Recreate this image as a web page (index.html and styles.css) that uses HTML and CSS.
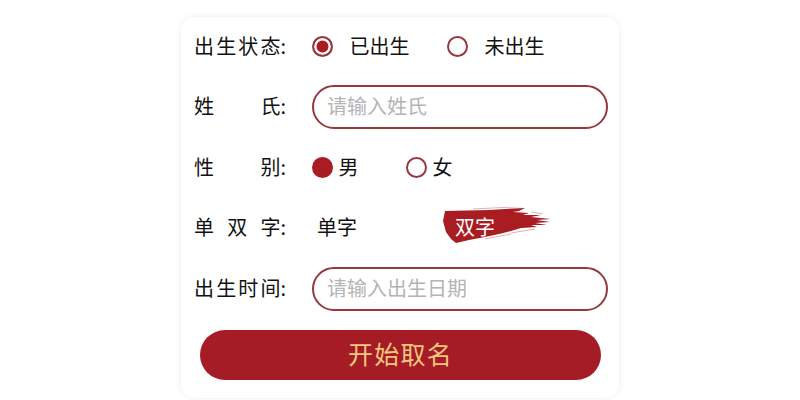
FILE: index.html
```html
<!DOCTYPE html>
<html lang="zh-CN">
<head>
<meta charset="utf-8">
<title>开始取名</title>
<link rel="stylesheet" href="styles.css">
</head>
<body>
<main class="card">
  <div class="row">
    <div class="label"><span>出</span><span>生</span><span>状</span><span>态:</span></div>
    <div class="options status">
      <span class="opt"><span class="radio dot"></span><span class="opt-text">已出生</span></span>
      <span class="opt"><span class="radio"></span><span class="opt-text">未出生</span></span>
    </div>
  </div>
  <div class="row">
    <div class="label"><span>姓</span><span>氏:</span></div>
    <div class="field placeholder">请输入姓氏</div>
  </div>
  <div class="row">
    <div class="label"><span>性</span><span>别:</span></div>
    <div class="options gender">
      <span class="opt"><span class="radio full"></span><span class="opt-text">男</span></span>
      <span class="opt"><span class="radio"></span><span class="opt-text">女</span></span>
    </div>
  </div>
  <div class="row">
    <div class="label"><span>单</span><span>双</span><span>字:</span></div>
    <div class="options chars">
      <span class="char">单字</span>
      <span class="char on">
        <svg class="brush" viewBox="0 0 108 36" aria-hidden="true">
          <path fill="#a81c22" d="M2 4 L24 3.500 L46 3 L62 2 L82 1 L76 4 L70 5 L86 6 L80 8 L98 8 L88 10 L108 12 L94 13 L107 15 L92 16 L104 18 L88 18 L94 20 L78 21 L68 24 L56 27 L42 30 L26 33 L13 36 L8 32 L3 25 L0 14 Z"/>
          <path fill="none" stroke="#a81c22" stroke-opacity=".5" stroke-width=".7" d="M30 2 L60 .500 L84 -.500 M68 26 L92 22 M42 32 L68 27 M88 5 L100 7"/>
        </svg>
        <span class="char-text">双字</span>
      </span>
    </div>
  </div>
  <div class="row">
    <div class="label"><span>出</span><span>生</span><span>时</span><span>间:</span></div>
    <div class="field placeholder">请输入出生日期</div>
  </div>
  <button class="submit" type="button">开始取名</button>
</main>
</body>
</html>
```
FILE: styles.css
```css
* { box-sizing: border-box; }
html, body { margin: 0; height: 400px; overflow: hidden; background: #fff; }
body {
  font-family: "Noto Sans CJK SC", "Liberation Sans", sans-serif;
  color: #111;
}
.card {
  width: 438px;
  height: 381px;
  margin: 17px 0 0 181px;
  padding: 7.500px 12px 0 13px;
  border-radius: 14px;
  background: #fff;
  box-shadow: 0 0 5px rgba(170, 110, 110, .16);
}
.row { display: flex; align-items: center; height: 44px; margin-bottom: 16.500px; font-size: 20px; }
.label { display: flex; justify-content: space-between; width: 92px; flex: none; margin-right: 26px; padding-bottom: 2px; line-height: 1; }
.options { display: flex; align-items: center; padding-bottom: 1px; }
.opt { display: flex; align-items: center; }
.opt-text { padding-bottom: 1px; }
.radio {
  width: 21px; height: 21px; flex: none;
  border: 2px solid #96393e; border-radius: 50%;
  background: #fff;
}
.radio.dot { background: #a81c22; box-shadow: inset 0 0 0 2.500px #fff; }
.radio.full { background: #a81c22; border-color: #a81c22; }
.status .opt { gap: 16.500px; width: 135px; }
.gender .opt { gap: 5.500px; width: 94px; }
.chars { position: relative; padding-bottom: 2px; }
.char { display: block; width: 131px; padding-left: 5px; line-height: 1; }
.char.on { position: relative; width: 108px; padding-left: 12px; color: #fff; }
.brush { position: absolute; left: 0; top: -10px; width: 108px; height: 36px; }
.char-text { position: relative; }
.field {
  flex: none;
  width: 296px; height: 44px;
  padding-left: 13px;
  border: 2px solid #96393e; border-radius: 22px;
  font-size: 20px; line-height: 38px; color: #b4b4b4;
}
.submit {
  display: block;
  width: 401px; height: 50px;
  margin: 19px 0 0 6px;
  padding: 0 0 4px;
  border: 0; border-radius: 25px;
  background: #a51c26;
  color: #f5c77e;
  font: 25px "Noto Sans CJK SC", "Liberation Sans", sans-serif;
  letter-spacing: 1.300px;
}
```
